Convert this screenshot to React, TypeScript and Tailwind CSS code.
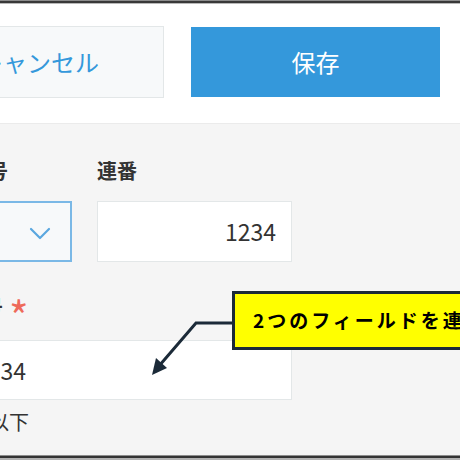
import React from 'react';

const FONT = "font-['Noto_Sans_CJK_JP','Noto_Sans',sans-serif]";

const Chevron: React.FC = () => (
  <svg width="22" height="13" viewBox="0 0 22 13" fill="none">
    <path d="M2 2 L11 11 L20 2" stroke="#5aa7df" strokeWidth="2.2" strokeLinecap="round" strokeLinejoin="round" />
  </svg>
);

const App: React.FC = () => {
  return (
    <div className={`relative w-[460px] h-[460px] overflow-hidden flex flex-col bg-[#f5f5f5] ${FONT}`}>
      {/* 上の枠線 */}
      <div className="flex flex-col">
        <div className="h-px bg-[#8c8c8c]" />
        <div className="h-[2px] bg-[#383838]" />
        <div className="h-px bg-[#b8b8b8]" />
      </div>

      <header className="h-[120px] bg-white border-b border-[#ebebeb] flex items-start pt-[22px] shrink-0">
        <button className="ml-[-86px] w-[250px] h-[72px] shrink-0 bg-[#f7f9fa] border border-[#e3e7e8] text-[#3498db] text-[24px] leading-none">
          キャンセル
        </button>
        <button className="ml-[27px] mt-px w-[249px] h-[70px] shrink-0 bg-[#3498db] text-white text-[24px] leading-none">
          保存
        </button>
      </header>

      <main className="flex-1 pt-[35px] flex flex-col">
        <div className="flex gap-[25px] ml-[-32px]">
          <div className="w-[104px] shrink-0 flex flex-col">
            <div className="h-[24px] text-[20px] leading-[24px] font-bold text-[#333]">番号</div>
            <div className="mt-[18px] h-[61px] bg-[#f7f9fa] border-2 border-[#7ab8e6] flex items-center justify-end pr-[19px] pt-[3px]">
              <Chevron />
            </div>
          </div>
          <div className="w-[195px] shrink-0 flex flex-col">
            <div className="h-[24px] text-[20px] leading-[24px] font-bold text-[#333]">連番</div>
            <div className="mt-[18px] h-[61px] bg-white border border-[#e3e7e8] flex items-center justify-end pr-[15px] text-[23px] text-[#333]">
              1234
            </div>
          </div>
        </div>

        <div className="mt-[33px] ml-[-40px] flex flex-col">
          <div className="h-[24px] flex items-start gap-[6px] ml-[3px] text-[20px] leading-[24px] font-bold text-[#333]">
            <span>番号</span>
            <span className="text-[#ee6a5a] font-normal text-[42px] leading-[42px] mt-[-1px]">*</span>
          </div>
          <div className="mt-[21px] w-[332px] h-[60px] bg-white border border-[#e3e7e8] flex items-center pl-[14px] text-[23px] text-[#333]">
            1234
          </div>
          <div className="mt-[10px] ml-[29px] text-[20px] leading-[24px] text-[#333]">以下</div>
        </div>
      </main>

      {/* 下の枠線 */}
      <div className="flex flex-col shrink-0">
        <div className="h-px bg-[#8c8c8c]" />
        <div className="h-[2px] bg-[#333]" />
        <div className="h-[2px] bg-[#b0b0b0]" />
      </div>

      {/* 吹き出し */}
      <svg className="absolute left-0 top-0 pointer-events-none" width="460" height="460" viewBox="0 0 460 460">
        <path d="M233 323 L196 323 L159 366" stroke="#1b2a38" strokeWidth="3" fill="none" strokeLinejoin="miter" />
        <polygon points="152,375 167,368 156,358" fill="#1b2a38" />
      </svg>
      <div className="absolute left-[232px] top-[291px] w-[280px] h-[59px] border-[3px] border-[#1b2a38] bg-[#ffff00] flex items-center pl-[18px] text-[19px] font-bold tracking-[3px] text-black whitespace-nowrap">
        2つのフィールドを連結します
      </div>
    </div>
  );
};

export default App;
